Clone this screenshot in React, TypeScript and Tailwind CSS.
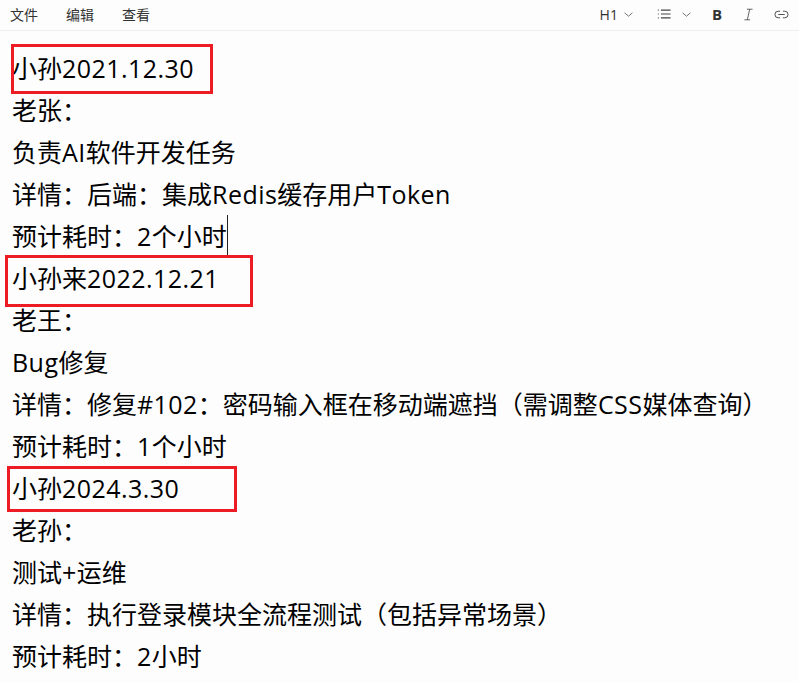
import type { ReactNode } from "react";

const lines = [
  "小孙2021.12.30",
  "老张：",
  "负责AI软件开发任务",
  "详情：后端：集成Redis缓存用户Token",
  "预计耗时：2个小时",
  "小孙来2022.12.21",
  "老王：",
  "Bug修复",
  "详情：修复#102：密码输入框在移动端遮挡（需调整CSS媒体查询）",
  "预计耗时：1个小时",
  "小孙2024.3.30",
  "老孙：",
  "测试+运维",
  "详情：执行登录模块全流程测试（包括异常场景）",
  "预计耗时：2小时",
];

const ToolbarIcon = ({ children, className }: { children: ReactNode; className: string }) => (
  <svg viewBox="0 0 16 16" fill="none" stroke="#444" strokeWidth="1" className={className}>
    {children}
  </svg>
);

const Chevron = () => (
  <ToolbarIcon className="w-[9px] h-[9px]">
    <path d="M1 5l7 6 7-6" strokeWidth="1.6" stroke="#666" />
  </ToolbarIcon>
);

const App = () => {
  return (
    <div className="relative w-[799px] h-[683px] overflow-hidden bg-[#fdfdfd] text-black font-['Open_Sans','Noto_Sans_CJK_SC',sans-serif]">
      <header className="h-[31px] flex items-center justify-between border-b border-[#efefef] pl-[10px] pr-[10px] pb-[2px] text-[#333]">
        <nav className="flex gap-[28px] text-[14px]">
          <span>文件</span>
          <span>编辑</span>
          <span>查看</span>
        </nav>
        <div className="flex items-center">
          <span className="text-[14px] mr-[6px]">H1</span>
          <Chevron />
          <ToolbarIcon className="w-[14px] h-[14px] ml-[24px] mr-[11px]">
            <path d="M4.5 3.5h11M4.5 8h11M4.5 12.5h11" strokeWidth="1.4" />
            <path d="M1 3.5h2M1 8h2M1 12.5h2" strokeWidth="1.4" strokeDasharray="1 1" />
          </ToolbarIcon>
          <Chevron />
          <span className="ml-[21px] font-bold text-[15px] leading-none text-[#333]">B</span>
          <ToolbarIcon className="w-[13px] h-[13px] ml-[20px]">
            <path d="M6 1.5h7M3 14.5h7M9.5 1.5L6.5 14.5" />
          </ToolbarIcon>
          <ToolbarIcon className="w-[15px] h-[15px] ml-[19px]">
            <path d="M6.5 4.5H4.5a3.5 3.5 0 000 7h2M9.5 4.5h2a3.5 3.5 0 010 7h-2M4.5 8h7" />
          </ToolbarIcon>
        </div>
      </header>
      <main className="pl-[12px] pt-[16px]">
        {lines.map((line, i) => (
          <div key={i} className="h-[42px] leading-[42px] text-[25px] whitespace-nowrap">
            {line.split(/([A-Za-z0-9.#+]+)/).map((part, j) =>
              j % 2 ? (
                <span key={j} className="tracking-[0.45px]">
                  {part}
                </span>
              ) : (
                part
              ),
            )}
          </div>
        ))}
      </main>
      {/* caret */}
      <div className="absolute left-[227px] top-[215px] w-px h-[40px] bg-[#222]" />
      {/* red annotation boxes */}
      <div className="absolute left-[11px] top-[44px] w-[202px] h-[50px] border-[3px] border-[#ed1c24]" />
      <div className="absolute left-[5px] top-[255px] w-[248px] h-[52px] border-[3px] border-[#ed1c24]" />
      <div className="absolute left-[7px] top-[466px] w-[230px] h-[46px] border-[3px] border-[#ed1c24]" />
    </div>
  );
};

export default App;
